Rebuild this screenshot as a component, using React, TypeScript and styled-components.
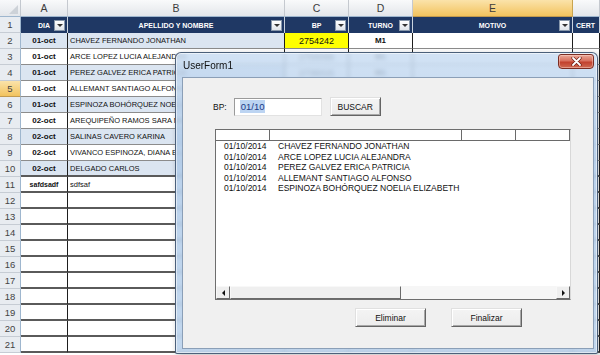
import React from 'react';
import styled, { createGlobalStyle } from 'styled-components';

const GlobalStyle = createGlobalStyle`
  html, body {
    margin: 0;
    padding: 0;
    background: #fff;
    overflow: hidden;
  }
  body {
    font-family: "Liberation Sans", Arial, sans-serif;
  }
`;

// Spreadsheet
const Screen = styled.div`
  position: relative;
  width: 600px;
  height: 355px;
  overflow: hidden;
`;

const Sheet = styled.div`
  display: grid;
  grid-template-columns: 21px 47px 217px 64px 64px 160px 27px;
  grid-template-rows: 17px;
  grid-auto-rows: 16px;
`;

const Corner = styled.div`
  box-sizing: border-box;
  background: linear-gradient(#f8f9fb, #e4e7eb);
  border-right: 1px solid #c3c8cf;
  border-bottom: 1px solid #9eb6ce;
  display: flex;
  justify-content: flex-end;
  align-items: flex-end;
  padding: 2px;

  &::after {
    content: '';
    border-left: 9px solid transparent;
    border-bottom: 9px solid #cdd2d8;
  }
`;

const ColHead = styled.div<{ $active?: boolean }>`
  box-sizing: border-box;
  background: ${(p) =>
    p.$active ? 'linear-gradient(#fbe3aa, #f2c35e)' : 'linear-gradient(#f9fafb, #e3e6ea)'};
  border-right: 1px solid ${(p) => (p.$active ? '#c9a44f' : '#c5c9cf')};
  border-bottom: 1px solid ${(p) => (p.$active ? '#c29a4f' : '#9eb6ce')};
  color: #3c3c3c;
  font-size: 10.5px;
  display: flex;
  align-items: center;
  justify-content: center;
`;

const RowHead = styled.div<{ $active?: boolean }>`
  box-sizing: border-box;
  background: ${(p) => (p.$active ? 'linear-gradient(#fbe3aa, #f2c35e)' : '#e8ecf1')};
  border-right: 1px solid #9eb6ce;
  border-bottom: 1px solid ${(p) => (p.$active ? '#c29a4f' : '#c6ccd4')};
  color: #444;
  font-size: 9.5px;
  display: flex;
  align-items: center;
  justify-content: center;
`;

const TitleCell = styled.div<{ $left?: boolean }>`
  box-sizing: border-box;
  background: #1f3864;
  border-right: 1px solid #c9d3df;
  color: #fff;
  font-weight: 700;
  font-size: 7px;
  display: flex;
  align-items: center;
  padding-left: ${(p) => (p.$left ? '3px' : '13px')};
  overflow: hidden;
  white-space: nowrap;
`;

const TitleText = styled.span<{ $left?: boolean }>`
  flex: 1;
  text-align: ${(p) => (p.$left ? 'left' : 'center')};
`;

const FilterButton = styled.span`
  box-sizing: border-box;
  width: 11px;
  height: 11px;
  margin-right: 2px;
  background: linear-gradient(#ffffff, #dfe4ea);
  border: 1px solid #8797ab;
  display: flex;
  align-items: center;
  justify-content: center;

  &::after {
    content: '';
    border-left: 3px solid transparent;
    border-right: 3px solid transparent;
    border-top: 3px solid #333;
  }
`;

const Cell = styled.div<{
  $fill?: string;
  $bold?: boolean;
  $center?: boolean;
  $heavy?: boolean;
  $size?: number;
}>`
  box-sizing: border-box;
  background: ${(p) => p.$fill || '#fff'};
  border-right: 1px solid #1e1e1e;
  border-bottom: ${(p) => (p.$heavy ? '2px solid #5a5a5a' : '1px solid #8c8c8c')};
  color: #111;
  font-size: ${(p) => p.$size || 7.5}px;
  font-weight: ${(p) => (p.$bold ? 700 : 400)};
  display: flex;
  align-items: center;
  justify-content: ${(p) => (p.$center ? 'center' : 'flex-start')};
  padding: 0 2px;
  white-space: nowrap;
  overflow: hidden;
`;

// Dialog (UserForm)
const Dialog = styled.div`
  position: absolute;
  left: 175px;
  top: 52px;
  width: 423px;
  height: 302px;
  box-sizing: border-box;
  border: 1px solid rgba(55, 75, 102, 0.85);
  border-radius: 6px 6px 2px 2px;
  background: linear-gradient(
    180deg,
    rgba(200, 220, 242, 0.82) 0%,
    rgba(172, 200, 231, 0.84) 30%,
    rgba(186, 210, 236, 0.88) 100%
  );
  backdrop-filter: blur(2px);
  box-shadow: inset 0 0 0 1px rgba(255, 255, 255, 0.55), 2px 2px 6px rgba(0, 0, 0, 0.25);
  display: flex;
  flex-direction: column;
  padding: 0 3px 4px 6px;
`;

const TitleBar = styled.div`
  height: 24px;
  display: flex;
  justify-content: space-between;
`;

const Title = styled.span`
  align-self: center;
  padding-left: 1px;
  font-size: 10px;
  color: #111;
`;

const CloseButton = styled.div`
  box-sizing: border-box;
  margin-top: 1px;
  width: 36px;
  height: 15px;
  border: 1px solid #7b2c22;
  border-radius: 3px 3px 4px 4px;
  background: linear-gradient(#eaa898 0%, #d8705e 45%, #c2412e 55%, #cf6a52 100%);
  box-shadow: inset 0 0 0 1px rgba(255, 220, 210, 0.45);
  display: flex;
  align-items: center;
  justify-content: center;
`;

const Client = styled.div`
  flex: 1;
  box-sizing: border-box;
  background: #f0f0f0;
  border: 1px solid #8b9fb7;
  display: flex;
  flex-direction: column;
  font-size: 8.5px;
  color: #111;
`;

const SearchRow = styled.div`
  margin-top: 19px;
  padding-left: 30px;
  height: 19px;
  display: flex;
  align-items: center;
`;

const Label = styled.span`
  margin-right: 7px;
  font-size: 8.5px;
`;

const TextBox = styled.div`
  box-sizing: border-box;
  width: 88px;
  height: 18px;
  margin-right: 8px;
  background: #fff;
  border: 1px solid;
  border-color: #9a9a9a #e2e2e2 #e2e2e2 #9a9a9a;
  display: flex;
  align-items: center;
  padding-left: 5px;
`;

const Selected = styled.span`
  background: #bcd4f2;
  color: #1b3a86;
  font-size: 9.5px;
  padding: 1px 1px;
`;

const FormButton = styled.div<{ $w: number }>`
  box-sizing: border-box;
  width: ${(p) => p.$w}px;
  height: 19px;
  background: linear-gradient(#f4f4f4, #ececec);
  border: 1px solid;
  border-color: #e0e0e0 #646464 #646464 #e0e0e0;
  box-shadow: inset 1px 1px #ffffff, inset -1px -1px #a8a8a8;
  display: flex;
  align-items: center;
  justify-content: center;
  font-size: 8.5px;
  color: #111;
`;

const ListBox = styled.div`
  box-sizing: border-box;
  margin: 13px 0 0 32px;
  width: 356px;
  height: 171px;
  background: #fff;
  border: 1px solid;
  border-color: #6e6e6e #d8d8d8 #6e6e6e #6e6e6e;
  display: flex;
  flex-direction: column;
`;

const ListHeader = styled.div`
  box-sizing: border-box;
  height: 11px;
  display: flex;
  border-bottom: 1px solid #6a6a6a;
`;

const ListHeaderCell = styled.div<{ $w: number }>`
  box-sizing: border-box;
  width: ${(p) => p.$w}px;
  border-right: 1px solid #6a6a6a;
`;

const ListItems = styled.div`
  flex: 1;
  overflow: hidden;
`;

const ListItem = styled.div`
  display: grid;
  grid-template-columns: 62px 1fr;
  line-height: 10.5px;
  font-size: 8.5px;
  white-space: nowrap;
`;

const DateText = styled.span`
  padding-left: 8px;
`;

const ScrollBar = styled.div`
  height: 13px;
  display: flex;
  background: #f3f3f3;
`;

const ScrollArrow = styled.div<{ $dir: 'left' | 'right' }>`
  box-sizing: border-box;
  width: 14px;
  background: #efefef;
  border: 1px solid;
  border-color: #f8f8f8 #6a6a6a #6a6a6a #f8f8f8;
  display: flex;
  align-items: center;
  justify-content: center;

  &::after {
    content: '';
    border-top: 3px solid transparent;
    border-bottom: 3px solid transparent;
    ${(p) => (p.$dir === 'left' ? 'border-right: 3px solid #111;' : 'border-left: 3px solid #111;')}
  }
`;

const ScrollThumb = styled.div`
  box-sizing: border-box;
  width: 171px;
  background: #efefef;
  border: 1px solid;
  border-color: #f8f8f8 #6a6a6a #6a6a6a #f8f8f8;
`;

const ScrollTrack = styled.div`
  flex: 1;
  background: #f6f6f6;
`;

const Footer = styled.div`
  margin-top: 8px;
  padding-left: 172px;
  display: flex;
  gap: 25px;
`;

const columns = ['A', 'B', 'C', 'D', 'E', ''];

const headers = [
  { label: 'DIA' },
  { label: 'APELLIDO Y NOMBRE' },
  { label: 'BP' },
  { label: 'TURNO' },
  { label: 'MOTIVO' },
];

const sheetRows = [
  ['01-oct', 'CHAVEZ FERNANDO JONATHAN', '2754242', 'M1'],
  ['01-oct', 'ARCE LOPEZ LUCIA ALEJANDRA', '2700099', 'M1'],
  ['01-oct', 'PEREZ GALVEZ ERICA PATRICIA', '2736015', 'M1'],
  ['01-oct', 'ALLEMANT SANTIAGO ALFONSO', '', ''],
  ['01-oct', 'ESPINOZA BOHÓRQUEZ NOELIA', '', ''],
  ['02-oct', 'AREQUIPEÑO RAMOS SARA MILAGROS', '', ''],
  ['02-oct', 'SALINAS CAVERO KARINA', '', ''],
  ['02-oct', 'VIVANCO ESPINOZA, DIANA ELIZABETH', '', ''],
  ['02-oct', 'DELGADO CARLOS', '', ''],
  ['safdsadf', 'sdfsaf', '', ''],
];

const listRows = [
  'CHAVEZ FERNANDO JONATHAN',
  'ARCE LOPEZ LUCIA ALEJANDRA',
  'PEREZ GALVEZ ERICA PATRICIA',
  'ALLEMANT SANTIAGO ALFONSO',
  'ESPINOZA BOHÓRQUEZ NOELIA ELIZABETH',
];

function renderRow(rowNum: number) {
  const data = sheetRows[rowNum - 2];
  const heavy = rowNum >= 10;
  const blue = rowNum <= 10 && rowNum % 2 === 0 ? '#dbe5f1' : undefined;
  const isJunk = rowNum === 11;

  return (
    <React.Fragment key={rowNum}>
      <RowHead $active={rowNum === 5}>{rowNum}</RowHead>
      <Cell $heavy={heavy} $fill={blue} $bold $center $size={isJunk ? 7 : 8}>
        {data?.[0]}
      </Cell>
      <Cell $heavy={heavy} $fill={blue}>
        {data?.[1]}
      </Cell>
      <Cell $heavy={heavy} $fill={rowNum === 2 ? '#ffff00' : undefined} $center $size={9}>
        {data?.[2]}
      </Cell>
      <Cell $heavy={heavy} $bold $center $size={8}>
        {data?.[3]}
      </Cell>
      <Cell $heavy={heavy} />
      <Cell $heavy={heavy} />
    </React.Fragment>
  );
}

export default function App() {
  const rowNums = Array.from({ length: 20 }, (_, i) => i + 2);

  return (
    <Screen>
      <GlobalStyle />
      <Sheet>
        <Corner />
        {columns.map((c) => (
          <ColHead key={c || 'F'} $active={c === 'E'}>
            {c}
          </ColHead>
        ))}

        <RowHead>1</RowHead>
        {headers.map((h) => (
          <TitleCell key={h.label}>
            <TitleText>{h.label}</TitleText>
            <FilterButton />
          </TitleCell>
        ))}
        <TitleCell $left>
          <TitleText $left>CERT</TitleText>
        </TitleCell>

        {rowNums.map((n) => renderRow(n))}
      </Sheet>

      <Dialog>
        <TitleBar>
          <Title>UserForm1</Title>
          <CloseButton>
            <svg width="11" height="9" viewBox="0 0 11 9">
              <path d="M2 1 L9 8 M9 1 L2 8" stroke="#6b1c12" strokeWidth="3.2" strokeLinecap="round" />
              <path d="M2 1 L9 8 M9 1 L2 8" stroke="#ffffff" strokeWidth="1.8" strokeLinecap="round" />
            </svg>
          </CloseButton>
        </TitleBar>

        <Client>
          <SearchRow>
            <Label>BP:</Label>
            <TextBox>
              <Selected>01/10</Selected>
            </TextBox>
            <FormButton $w={51}>BUSCAR</FormButton>
          </SearchRow>

          <ListBox>
            <ListHeader>
              <ListHeaderCell $w={54} />
              <ListHeaderCell $w={192} />
              <ListHeaderCell $w={54} />
              <ListHeaderCell $w={54} />
            </ListHeader>
            <ListItems>
              {listRows.map((name) => (
                <ListItem key={name}>
                  <DateText>01/10/2014</DateText>
                  <span>{name}</span>
                </ListItem>
              ))}
            </ListItems>
            <ScrollBar>
              <ScrollArrow $dir="left" />
              <ScrollThumb />
              <ScrollTrack />
              <ScrollArrow $dir="right" />
            </ScrollBar>
          </ListBox>

          <Footer>
            <FormButton $w={71}>Eliminar</FormButton>
            <FormButton $w={71}>Finalizar</FormButton>
          </Footer>
        </Client>
      </Dialog>
    </Screen>
  );
}
